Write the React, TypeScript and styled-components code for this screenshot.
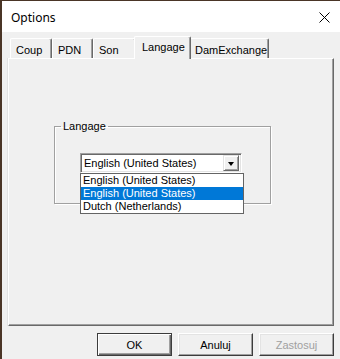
import styled, { createGlobalStyle } from 'styled-components';

const GlobalStyle = createGlobalStyle`
    html, body {
        margin: 0;
        padding: 0;
        background: #4a3526;
        overflow: hidden;
    }
    body {
        font-family: "Liberation Sans", Arial, sans-serif;
        font-size: 11px;
        color: #000;
    }
`;

const Window = styled.div`
    margin: 1px 0 0 2px;
    width: 338px;
    height: 358px;
    background: #f0f0f0;
    display: flex;
    flex-flow: column;
`;

const TitleBar = styled.div`
    height: 31px;
    flex: none;
    background: #fff;
    display: flex;
    align-items: center;
    justify-content: space-between;
    padding: 0 10px 0 9px;
`;

const Title = styled.span`
    font-family: "Noto Sans", "Open Sans", sans-serif;
    font-size: 12px;
    margin-top: 1px;
`;

const CloseIcon = styled.svg`
    width: 11px;
    height: 11px;
    margin-top: 1px;
`;

const Content = styled.div`
    padding: 4px 6px 0 6px;
    display: flex;
    flex-flow: column;
`;

const TabRow = styled.div`
    height: 22px;
    display: flex;
    align-items: flex-end;
    padding-left: 2px;
    position: relative;
    z-index: 1;
`;

const Tab = styled.div<{ $w: number; $active?: boolean }>`
    box-sizing: border-box;
    width: ${p => p.$w}px;
    height: ${p => (p.$active ? 23 : 20)}px;
    margin: 0 ${p => (p.$active ? -2 : 0)}px ${p => (p.$active ? -1 : 0)}px;
    padding-top: ${p => (p.$active ? 4 : 5)}px;
    padding-left: ${p => (p.$active ? 7 : 5)}px;
    line-height: 12px;
    background: #f0f0f0;
    border-top: 1px solid #fff;
    border-left: 1px solid #fff;
    border-right: 1px solid #696969;
    box-shadow: inset -1px 0 0 #a0a0a0;
    border-radius: 2px 2px 0 0;
    position: relative;
    z-index: ${p => (p.$active ? 2 : 0)};
    white-space: nowrap;
`;

const Panel = styled.div`
    box-sizing: border-box;
    height: 268px;
    border-top: 1px solid #fff;
    border-left: 1px solid #fff;
    border-right: 1px solid #696969;
    border-bottom: 1px solid #696969;
    box-shadow: inset -1px -1px 0 #a0a0a0, -1px 0 0 #e3e3e3;
    padding: 61px 0 0 45px;
`;

const Group = styled.fieldset`
    box-sizing: border-box;
    width: 217px;
    height: 84px;
    margin: 0;
    padding: 20px 0 0 6px;
    border: 1px solid #a0a0a0;
    box-shadow: 1px 1px 0 #fff, inset 1px 1px 0 #fff;
`;

const Legend = styled.legend`
    padding: 0 2px;
    line-height: 13px;
`;

const Combo = styled.div`
    position: relative;
    box-sizing: border-box;
    width: 162px;
    height: 20px;
    margin-left: 19px;
    background: #fff;
    border-top: 1px solid #a0a0a0;
    border-left: 1px solid #a0a0a0;
    border-right: 1px solid #fff;
    border-bottom: 1px solid #fff;
    box-shadow: inset 1px 1px 0 #696969, inset -1px -1px 0 #e3e3e3;
    display: flex;
    align-items: center;
    padding: 0 2px 0 3px;
`;

const ComboText = styled.span`
    flex: 1;
    white-space: nowrap;
`;

const ArrowButton = styled.div`
    box-sizing: border-box;
    width: 16px;
    height: 16px;
    background: #f0f0f0;
    border-top: 1px solid #e3e3e3;
    border-left: 1px solid #e3e3e3;
    border-right: 1px solid #696969;
    border-bottom: 1px solid #696969;
    box-shadow: inset 1px 1px 0 #fff, inset -1px -1px 0 #a0a0a0;
    display: flex;
    align-items: center;
    justify-content: center;
`;

const Arrow = styled.div`
    width: 0;
    height: 0;
    border-left: 3.5px solid transparent;
    border-right: 3.5px solid transparent;
    border-top: 4px solid #000;
    margin-top: 1px;
`;

const List = styled.div`
    position: absolute;
    top: 19px;
    left: -1px;
    box-sizing: border-box;
    width: 164px;
    background: #fff;
    border: 1px solid #646464;
    z-index: 5;
`;

const Item = styled.div<{ $selected?: boolean }>`
    height: 13px;
    line-height: 13px;
    padding-left: 2px;
    white-space: nowrap;
    background: ${p => (p.$selected ? '#0078d7' : '#fff')};
    color: ${p => (p.$selected ? '#fff' : '#000')};
`;

const ButtonRow = styled.div`
    display: flex;
    justify-content: flex-end;
    gap: 6px;
    margin-top: 7px;
`;

const Button = styled.div<{ $default?: boolean; $disabled?: boolean }>`
    box-sizing: border-box;
    width: 75px;
    height: 23px;
    display: flex;
    align-items: center;
    justify-content: center;
    background: #f0f0f0;
    color: ${p => (p.$disabled ? '#a0a0a0' : '#000')};
    border: 1px solid ${p => (p.$default ? '#3c3c3c' : '#fff')};
    border-right-color: #3c3c3c;
    border-bottom-color: #3c3c3c;
    box-shadow: ${p =>
        p.$default
            ? 'inset 1px 1px 0 #fff, inset -1px -1px 0 #696969, inset -2px -2px 0 #a0a0a0'
            : 'inset -1px -1px 0 #a0a0a0, inset 1px 1px 0 #e3e3e3'};
`;

const tabs = [
    { label: 'Coup', w: 42 },
    { label: 'PDN', w: 41 },
    { label: 'Son', w: 43 },
    { label: 'Langage', w: 57, active: true },
    { label: 'DamExchange', w: 80 },
];

const languages = ['English (United States)', 'English (United States)', 'Dutch (Netherlands)'];

const App = () => {
    return (
        <>
            <GlobalStyle />
            <Window>
                <TitleBar>
                    <Title>Options</Title>
                    <CloseIcon viewBox="0 0 11 11">
                        <path d="M0.5 0.5 L10.5 10.5 M10.5 0.5 L0.5 10.5" stroke="#000" strokeWidth="1" />
                    </CloseIcon>
                </TitleBar>
                <Content>
                    <TabRow>
                        {tabs.map(t => (
                            <Tab key={t.label} $w={t.w} $active={t.active}>{t.label}</Tab>
                        ))}
                    </TabRow>
                    <Panel>
                        <Group>
                            <Legend>Langage</Legend>
                            <Combo>
                                <ComboText>English (United States)</ComboText>
                                <ArrowButton><Arrow /></ArrowButton>
                                <List>
                                    {languages.map((l, i) => (
                                        <Item key={i} $selected={i === 1}>{l}</Item>
                                    ))}
                                </List>
                            </Combo>
                        </Group>
                    </Panel>
                    <ButtonRow>
                        <Button $default>OK</Button>
                        <Button>Anuluj</Button>
                        <Button $disabled>Zastosuj</Button>
                    </ButtonRow>
                </Content>
            </Window>
        </>
    );
};

export default App;
